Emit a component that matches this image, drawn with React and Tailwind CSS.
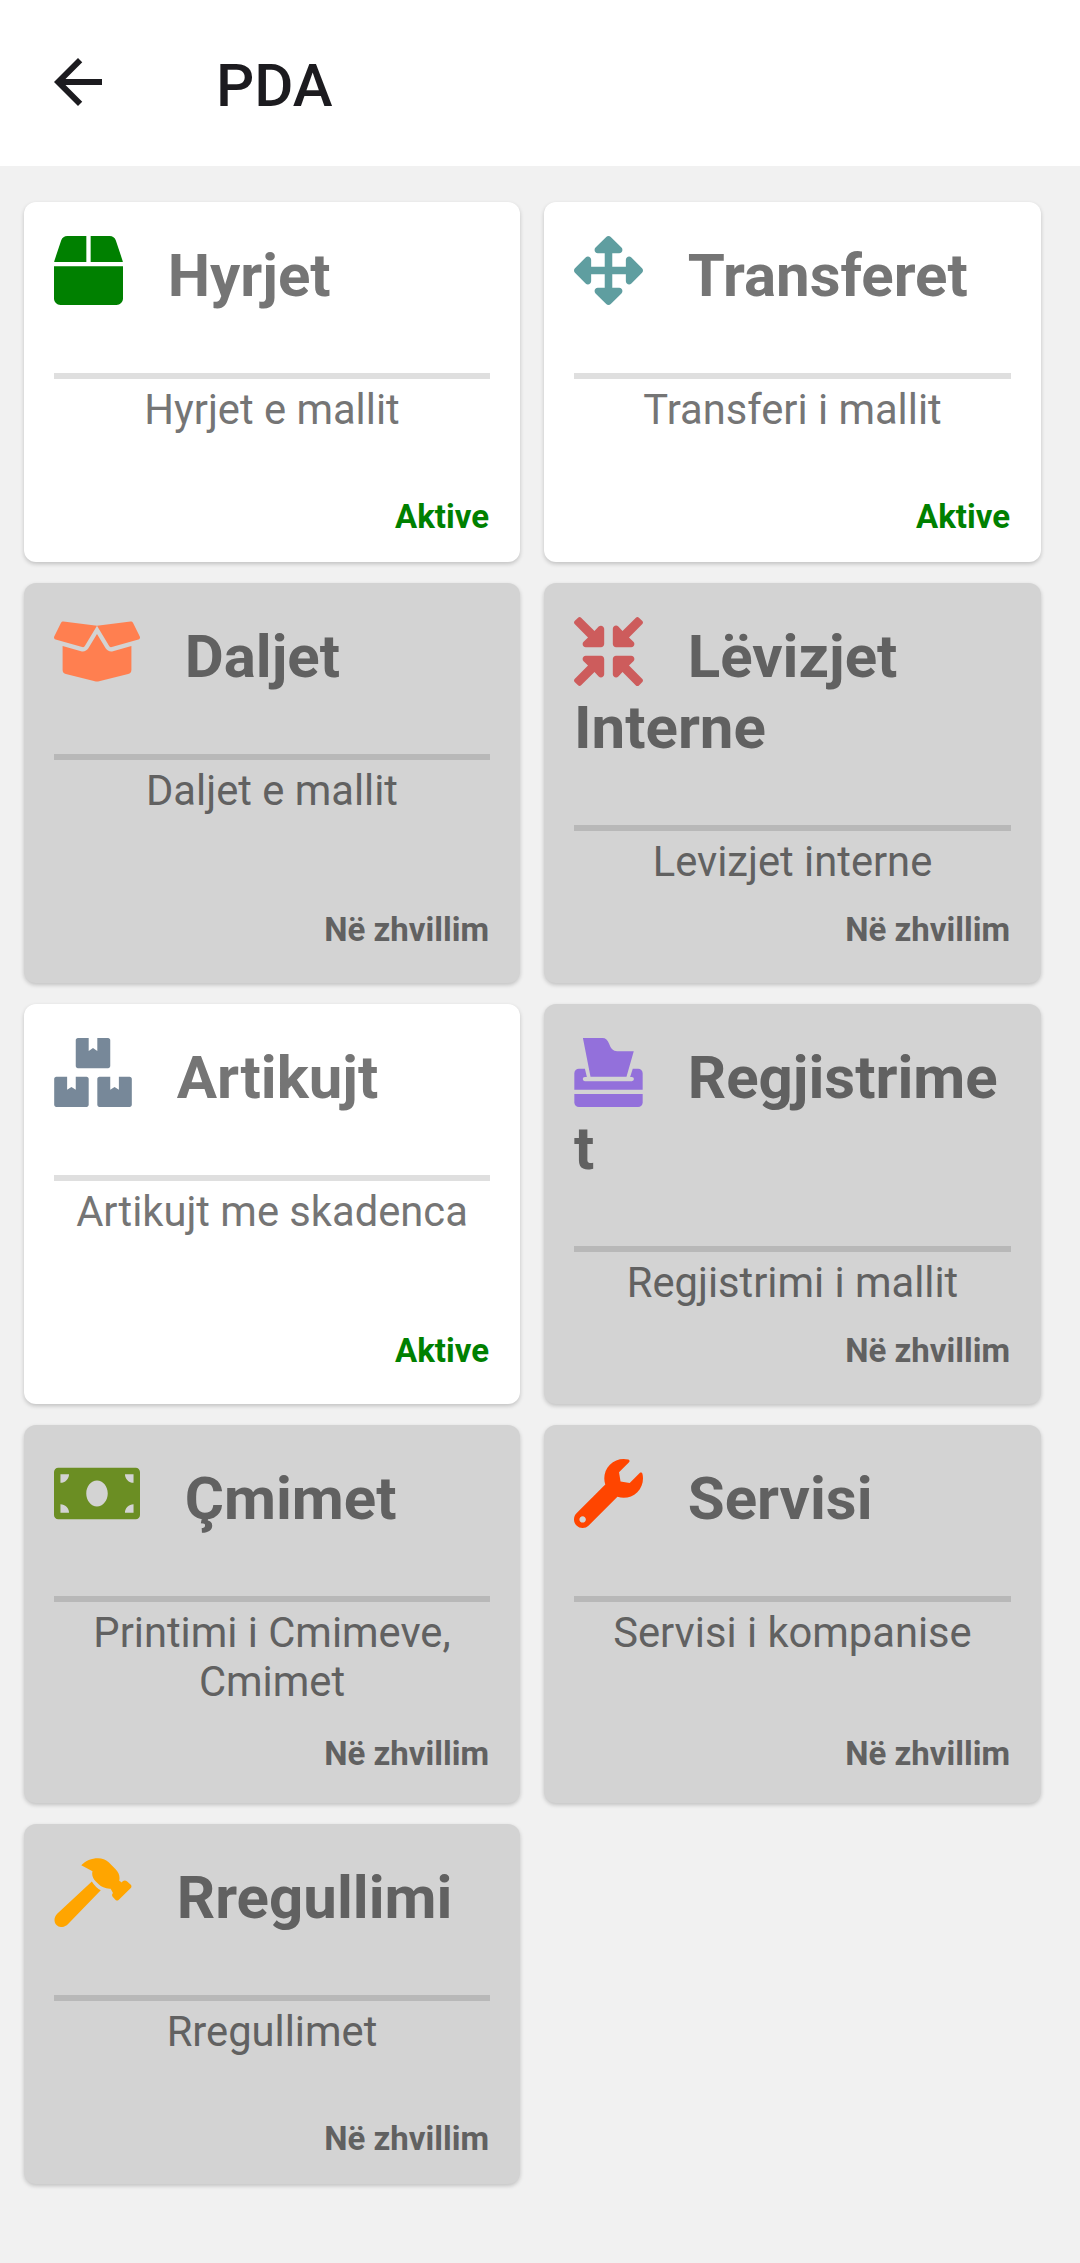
import { FaArrowsAlt, FaBox, FaBoxes, FaBoxOpen, FaCompressArrowsAlt, FaMoneyBill, FaWrench } from 'react-icons/fa';
import { MdArrowBack } from 'react-icons/md';

function BallotIcon({ className }) {
    return (
        <svg viewBox="18 15 207 209" fill="currentColor" className={className}>
            <path d="M44 15H103C113 15 119 21 123 32C129 48 135 55 148 55H198L176 132H67Z" />
            <path d="M32 108H50L56 133H50a6.5 6.5 0 0 0 0 13H192a6.5 6.5 0 0 0 0-13H187L195 108H211a14 14 0 0 1 14 14V172H18V122a14 14 0 0 1 14-14Z" />
            <path d="M18 185H225V210a14 14 0 0 1-14 14H32a14 14 0 0 1-14-14Z" />
        </svg>
    );
}

function HammerIcon({ className }) {
    return (
        <svg viewBox="18 15 233 209" fill="currentColor" className={className}>
            <path d="M131 86Q142 104 158 113L59 215C49 226 33 227 24 218C15 209 16 194 26 184Z" />
            <path d="M99 37C112 24 130 16 150 16C162 16 173 20 182 28L203 49C212 58 217 70 214 84L222 89C225 83 232 81 238 86L249 96Q253 101 249 106L212 142Q208 146 203 142L194 132Q190 127 195 121L188 108C173 109 160 103 151 94L143 86C134 77 130 67 133 55Z" />
        </svg>
    );
}

const modules = [
    { title: 'Hyrjet', text: 'Hyrjet e mallit', active: true, icon: FaBox, iconClass: 'w-[69px] text-[#008000]', bottom: 'pb-[26px]' },
    { title: 'Transferet', text: 'Transferi i mallit', active: true, icon: FaArrowsAlt, iconClass: 'w-[69px] text-[#5f9ea0]', bottom: 'pb-[26px]' },
    { title: 'Daljet', text: 'Daljet e mallit', active: false, icon: FaBoxOpen, iconClass: 'w-[86px] text-[#ff7f50]', bottom: 'pb-[34px]' },
    { title: 'Lëvizjet Interne', text: 'Levizjet interne', active: false, icon: FaCompressArrowsAlt, iconClass: 'w-[69px] text-[#cd5c5c]', bottom: 'pb-[34px]' },
    { title: 'Artikujt', text: 'Artikujt me skadenca', active: true, icon: FaBoxes, iconClass: 'w-[78px] text-[#778899]', bottom: 'pb-[34px]' },
    { title: 'Regjistrimet', text: 'Regjistrimi i mallit', active: false, icon: BallotIcon, iconClass: 'w-[69px] text-[#9370db]', bottom: 'pb-[34px]' },
    { title: 'Çmimet', text: 'Printimi i Cmimeve, Cmimet', active: false, icon: FaMoneyBill, iconClass: 'w-[86px] text-[#6b8e23]', bottom: 'pb-[30px]' },
    { title: 'Servisi', text: 'Servisi i kompanise', active: false, icon: FaWrench, iconClass: 'w-[69px] text-[#ff4500]', bottom: 'pb-[30px]' },
    { title: 'Rregullimi', text: 'Rregullimet', active: false, icon: HammerIcon, iconClass: 'w-[78px] text-[#ffa500]', bottom: 'pb-[26px]' },
];

function ModuleCard({ module }) {
    const Icon = module.icon;
    // single long words may break anywhere, several words break at the space
    const wrap = module.title.includes(' ') ? 'break-words' : 'break-all';

    return (
        <div
            className={`flex flex-col rounded-xl px-[30px] pt-[34px] shadow-[0_2px_4px_rgba(0,0,0,0.2)] ${module.bottom} ${module.active ? 'bg-white text-[#757575]' : 'bg-[#d3d3d3] text-[#616161]'}`}
        >
            <h2 className={`text-[60px] leading-[71px] font-bold ${wrap}`}>
                <Icon className={`inline-block h-[69px] align-[-9px] ${module.iconClass}`} />
                {'\u00A0\u00A0\u00A0'}{module.title}
            </h2>
            <div className={`mt-[62px] h-1.5 shrink-0 ${module.active ? 'bg-[#dfdfdf]' : 'bg-[#b8b8b8]'}`}></div>
            <p className="mt-1.5 text-center text-[41.7px] leading-[49px]">{module.text}</p>
            <p className={`mt-auto pr-px text-right text-[33px] leading-[38px] font-bold ${module.active ? 'text-[#008000]' : ''}`}>
                {module.active ? 'Aktive' : 'Në zhvillim'}
            </p>
        </div>
    );
}

export default function App() {
    return (
        <div className="min-h-[2263px] bg-[#f1f1f1] font-['Roboto',sans-serif]">
            <header className="flex h-[166px] items-center bg-white pl-[42px]">
                <button className="mb-0.5 text-[#1c1b1f]">
                    <MdArrowBack className="size-[72px]" />
                </button>
                <h1 className="mt-1.5 ml-[102px] text-[60px] leading-[70px] font-medium text-[#1c1b1f]">PDA</h1>
            </header>

            <main className="grid grid-cols-[496px_497px] grid-rows-[360px_400px_400px_378px_360px] gap-x-6 gap-y-[21px] pt-9 pl-6">
                {modules.map((module) => (
                    <ModuleCard key={module.title} module={module} />
                ))}
            </main>
        </div>
    );
}
